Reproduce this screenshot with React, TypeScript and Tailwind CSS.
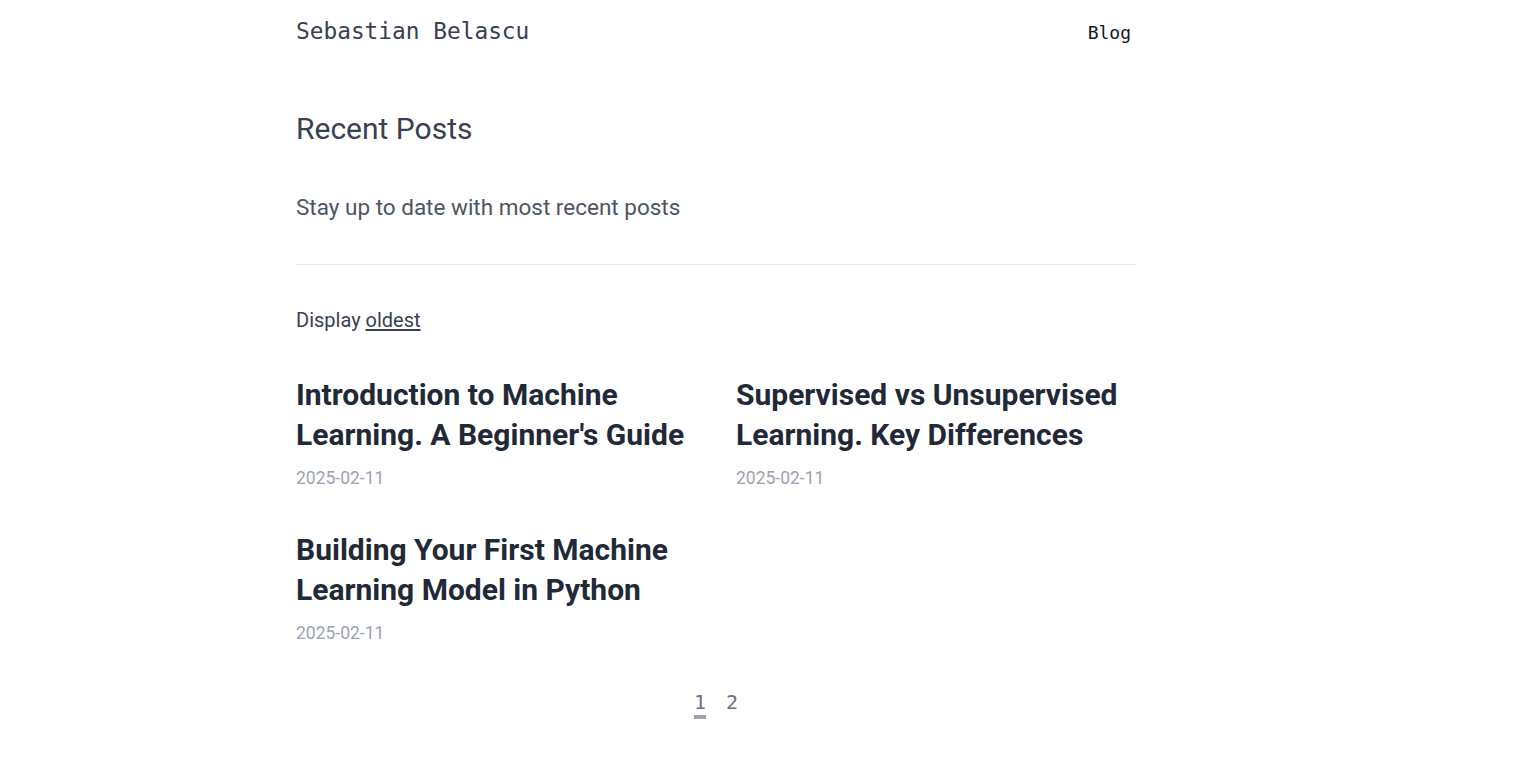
import React from 'react'

const posts = [
  { title: 'Introduction to Machine Learning. A Beginner\'s Guide', date: '2025-02-11' },
  { title: 'Supervised vs Unsupervised Learning. Key Differences', date: '2025-02-11' },
  { title: 'Building Your First Machine Learning Model in Python', date: '2025-02-11' },
]

const mono = { fontFamily: '"DejaVu Sans Mono", "Liberation Mono", monospace' }

export default function App() {
  return (
    <div className="min-h-screen bg-white font-['Roboto',sans-serif]">
      <div className="ml-[296px] w-[840px]">
        {/* Header */}
        <header className="flex items-center justify-between h-[64px]">
          <a href="#" className="text-[22.8px] text-[#374151] -translate-y-[1px]" style={mono}>
            Sebastian Belascu
          </a>
          <nav>
            <a href="#" className="text-[18px] text-[#111827] pr-[5px]" style={mono}>
              Blog
            </a>
          </nav>
        </header>

        {/* Intro */}
        <section className="pt-[45px] pb-[41px] border-b border-[#e5e7eb]">
          <h1 className="text-[30px] leading-[40px] text-[#374151] font-normal">Recent Posts</h1>
          <p className="mt-[42px] text-[22.5px] leading-[32px] text-[#4b5563]">
            Stay up to date with most recent posts
          </p>
        </section>

        <div className="pt-[41px] text-[20px] leading-[28px] text-[#374151]">
          Display <a href="#" className="underline underline-offset-2">oldest</a>
        </div>

        {/* Posts */}
        <div className="grid grid-cols-2 gap-x-10 gap-y-[38px] mt-[41px]">
          {posts.map((p) => (
            <article key={p.title}>
              <h2 className="text-[30px] leading-[40px] font-bold text-[#1f2937]">{p.title}</h2>
              <div className="mt-[9px] text-[17.5px] leading-[28px] text-[#9ca3af]">{p.date}</div>
            </article>
          ))}
        </div>

        {/* Pagination */}
        <div className="flex justify-center gap-[20px] mt-[42px] text-[20px] text-[#6b7280]" style={mono}>
          <span className="border-b-[4px] border-[#9ca3af] leading-[26px]">1</span>
          <span className="leading-[26px]">2</span>
        </div>
      </div>
    </div>
  )
}
